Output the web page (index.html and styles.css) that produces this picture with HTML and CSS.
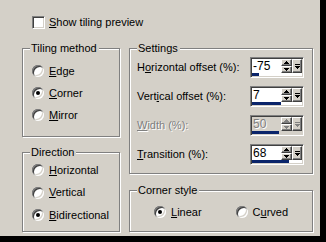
FILE: index.html
```html
<!DOCTYPE html>
<html lang="en">
<head>
  <meta charset="UTF-8" />
  <title>Tiling</title>
  <link rel="stylesheet" href="styles.css">
</head>
<body>
  <div class="dialog">
    <label class="check-row">
      <span class="checkbox"></span>
      <span><u>S</u>how tiling preview</span>
    </label>

    <div class="columns">
      <div class="col col-left">
        <div class="group group-tiling">
          <div class="group-title">Tiling method</div>
          <div class="radio-list">
            <div class="radio-row"><span class="radio"></span><span><u>E</u>dge</span></div>
            <div class="radio-row"><span class="radio checked"></span><span><u>C</u>orner</span></div>
            <div class="radio-row"><span class="radio"></span><span><u>M</u>irror</span></div>
          </div>
        </div>

        <div class="group group-direction">
          <div class="group-title">Direction</div>
          <div class="radio-list">
            <div class="radio-row"><span class="radio"></span><span><u>H</u>orizontal</span></div>
            <div class="radio-row"><span class="radio"></span><span><u>V</u>ertical</span></div>
            <div class="radio-row"><span class="radio checked"></span><span><u>B</u>idirectional</span></div>
          </div>
        </div>
      </div>

      <div class="col col-right">
        <div class="group group-settings">
          <div class="group-title">Settings</div>
          <div class="field-list">
            <div class="field-row">
              <span>H<u>o</u>rizontal offset (%):</span>
              <div class="spin">
                <div class="spin-top">
                  <span class="spin-value">-75</span>
                  <span class="spin-arrows">
                    <span class="spin-btn"><svg width="5" height="3"><path d="M2 0h1v1h1v1h1v1H0V2h1V1h1z"/></svg></span>
                    <span class="spin-btn"><svg width="5" height="3"><path d="M0 0h5v1H4v1H3v1H2V2H1V1H0z"/></svg></span>
                  </span>
                  <span class="spin-btn slider"><svg width="5" height="5"><path d="M0 0h5v1H0z M0 2h5v1H4v1H3v1H2V4H1V3H0z"/></svg></span>
                </div>
                <div class="spin-bar"><div class="spin-fill" style="width: 7px"></div></div>
              </div>
            </div>

            <div class="field-row">
              <span>Vert<u>i</u>cal offset (%):</span>
              <div class="spin">
                <div class="spin-top">
                  <span class="spin-value">7</span>
                  <span class="spin-arrows">
                    <span class="spin-btn"><svg width="5" height="3"><path d="M2 0h1v1h1v1h1v1H0V2h1V1h1z"/></svg></span>
                    <span class="spin-btn"><svg width="5" height="3"><path d="M0 0h5v1H4v1H3v1H2V2H1V1H0z"/></svg></span>
                  </span>
                  <span class="spin-btn slider"><svg width="5" height="5"><path d="M0 0h5v1H0z M0 2h5v1H4v1H3v1H2V4H1V3H0z"/></svg></span>
                </div>
                <div class="spin-bar"><div class="spin-fill" style="width: 29px"></div></div>
              </div>
            </div>

            <div class="field-row disabled">
              <span><u>W</u>idth (%):</span>
              <div class="spin">
                <div class="spin-top">
                  <span class="spin-value">50</span>
                  <span class="spin-arrows">
                    <span class="spin-btn"><svg width="5" height="3"><path d="M2 0h1v1h1v1h1v1H0V2h1V1h1z"/></svg></span>
                    <span class="spin-btn"><svg width="5" height="3"><path d="M0 0h5v1H4v1H3v1H2V2H1V1H0z"/></svg></span>
                  </span>
                  <span class="spin-btn slider"><svg width="5" height="5"><path d="M0 0h5v1H0z M0 2h5v1H4v1H3v1H2V4H1V3H0z"/></svg></span>
                </div>
                <div class="spin-bar"><div class="spin-fill" style="width: 27px"></div></div>
              </div>
            </div>

            <div class="field-row">
              <span><u>T</u>ransition (%):</span>
              <div class="spin">
                <div class="spin-top">
                  <span class="spin-value">68</span>
                  <span class="spin-arrows">
                    <span class="spin-btn"><svg width="5" height="3"><path d="M2 0h1v1h1v1h1v1H0V2h1V1h1z"/></svg></span>
                    <span class="spin-btn"><svg width="5" height="3"><path d="M0 0h5v1H4v1H3v1H2V2H1V1H0z"/></svg></span>
                  </span>
                  <span class="spin-btn slider"><svg width="5" height="5"><path d="M0 0h5v1H0z M0 2h5v1H4v1H3v1H2V4H1V3H0z"/></svg></span>
                </div>
                <div class="spin-bar"><div class="spin-fill" style="width: 37px"></div></div>
              </div>
            </div>
          </div>
        </div>

        <div class="group group-corner">
          <div class="group-title">Corner style</div>
          <div class="radio-inline">
            <div class="radio-row"><span class="radio checked"></span><span><u>L</u>inear</span></div>
            <div class="radio-row"><span class="radio"></span><span>C<u>u</u>rved</span></div>
          </div>
        </div>
      </div>
    </div>
  </div>
</body>
</html>
```

FILE: styles.css
```css
* { box-sizing: border-box; margin: 0; padding: 0; }
body {
  background: #000;
  font-family: "Liberation Sans", Arial, sans-serif;
  font-size: 11px;
  line-height: 13px;
  color: #000;
}
u { text-decoration: underline; text-underline-offset: 1px; }

.dialog {
  width: 320px;
  height: 236px;
  background: #d4d0c8;
  padding: 16px 0 0 22px;
}

.check-row {
  display: flex;
  align-items: center;
  gap: 4px;
  height: 13px;
  margin-left: 10px;
}
.checkbox {
  width: 13px;
  height: 13px;
  background: #fff;
  border: 1px solid;
  border-color: #808080 #fff #fff #808080;
  box-shadow: inset 1px 1px 0 #404040, inset -1px -1px 0 #d4d0c8;
}

.columns {
  display: flex;
  gap: 9px;
  margin-top: 19px;
}
.col { display: flex; flex-direction: column; }
.col-left { width: 98px; gap: 15px; }
.col-right { width: 184px; gap: 16px; }

/* etched group box */
.group {
  border: 1px solid #808080;
  box-shadow: inset 1px 1px 0 #fff, 1px 1px 0 #fff;
  display: flex;
  flex-direction: column;
}
.group-title {
  align-self: flex-start;
  margin: -7px 0 0 7px;
  padding: 0 2px 0 1px;
  background: #d4d0c8;
  height: 13px;
}
.group-tiling { height: 89px; }
.group-direction { height: 80px; }
.group-settings { height: 126px; }
.group-corner { height: 42px; }

.radio-list { margin-left: 9px; }
.group-tiling .radio-list { margin-top: 5px; }
.group-direction .radio-row { height: 22.5px; }

.radio-row {
  display: flex;
  align-items: center;
  gap: 5px;
  height: 22px;
}
.radio {
  position: relative;
  width: 12px;
  height: 12px;
  border-radius: 50%;
  background: #fff;
  box-shadow:
    inset 1px 1px 0 #808080,
    inset -1px -1px 0 #fff,
    inset 2px 2px 0 #404040,
    inset -2px -2px 0 #d4d0c8;
}
.radio.checked::after {
  content: "";
  position: absolute;
  left: 4px;
  top: 4px;
  width: 4px;
  height: 4px;
  border-radius: 50%;
  background: #000;
}

.radio-inline {
  display: flex;
  gap: 34px;
  margin: 4px 0 0 24px;
}

.field-list {
  display: flex;
  flex-direction: column;
  gap: 8px;
  margin: 2px 8px 0 7px;
}
.field-row {
  display: flex;
  align-items: center;
  justify-content: space-between;
  height: 21px;
}

/* spin edit with slider bar */
.spin {
  width: 54px;
  height: 21px;
  border: 1px solid;
  border-color: #808080 #fff #fff #808080;
  box-shadow: inset 1px 1px 0 #404040, inset -1px -1px 0 #d4d0c8;
  padding: 1px;
  background: #fff;
  display: flex;
  flex-direction: column;
}
.spin-top { display: flex; height: 14px; }
.spin-value { flex: 1; padding-left: 1px; line-height: 14px; font-size: 12px; }
.spin-arrows { display: flex; flex-direction: column; width: 11px; }
.spin-btn {
  display: flex;
  align-items: center;
  justify-content: center;
  height: 7px;
  background: #d4d0c8;
  border: 1px solid;
  border-color: #fff #404040 #404040 #fff;
  box-shadow: inset -1px -1px 0 #808080;
}
.spin-btn svg { display: block; shape-rendering: crispEdges; fill: #000; }
.spin-btn.slider { width: 10px; height: 14px; }
.spin-bar { height: 3px; }
.spin-fill { height: 3px; background: #0a246a; }

.disabled { color: #808080; }
.disabled > span:first-child,
.disabled .spin-value { text-shadow: 1px 1px 0 #fff; }
.disabled .spin { background: #d4d0c8; }
.disabled .spin-btn svg { fill: #808080; }
```
